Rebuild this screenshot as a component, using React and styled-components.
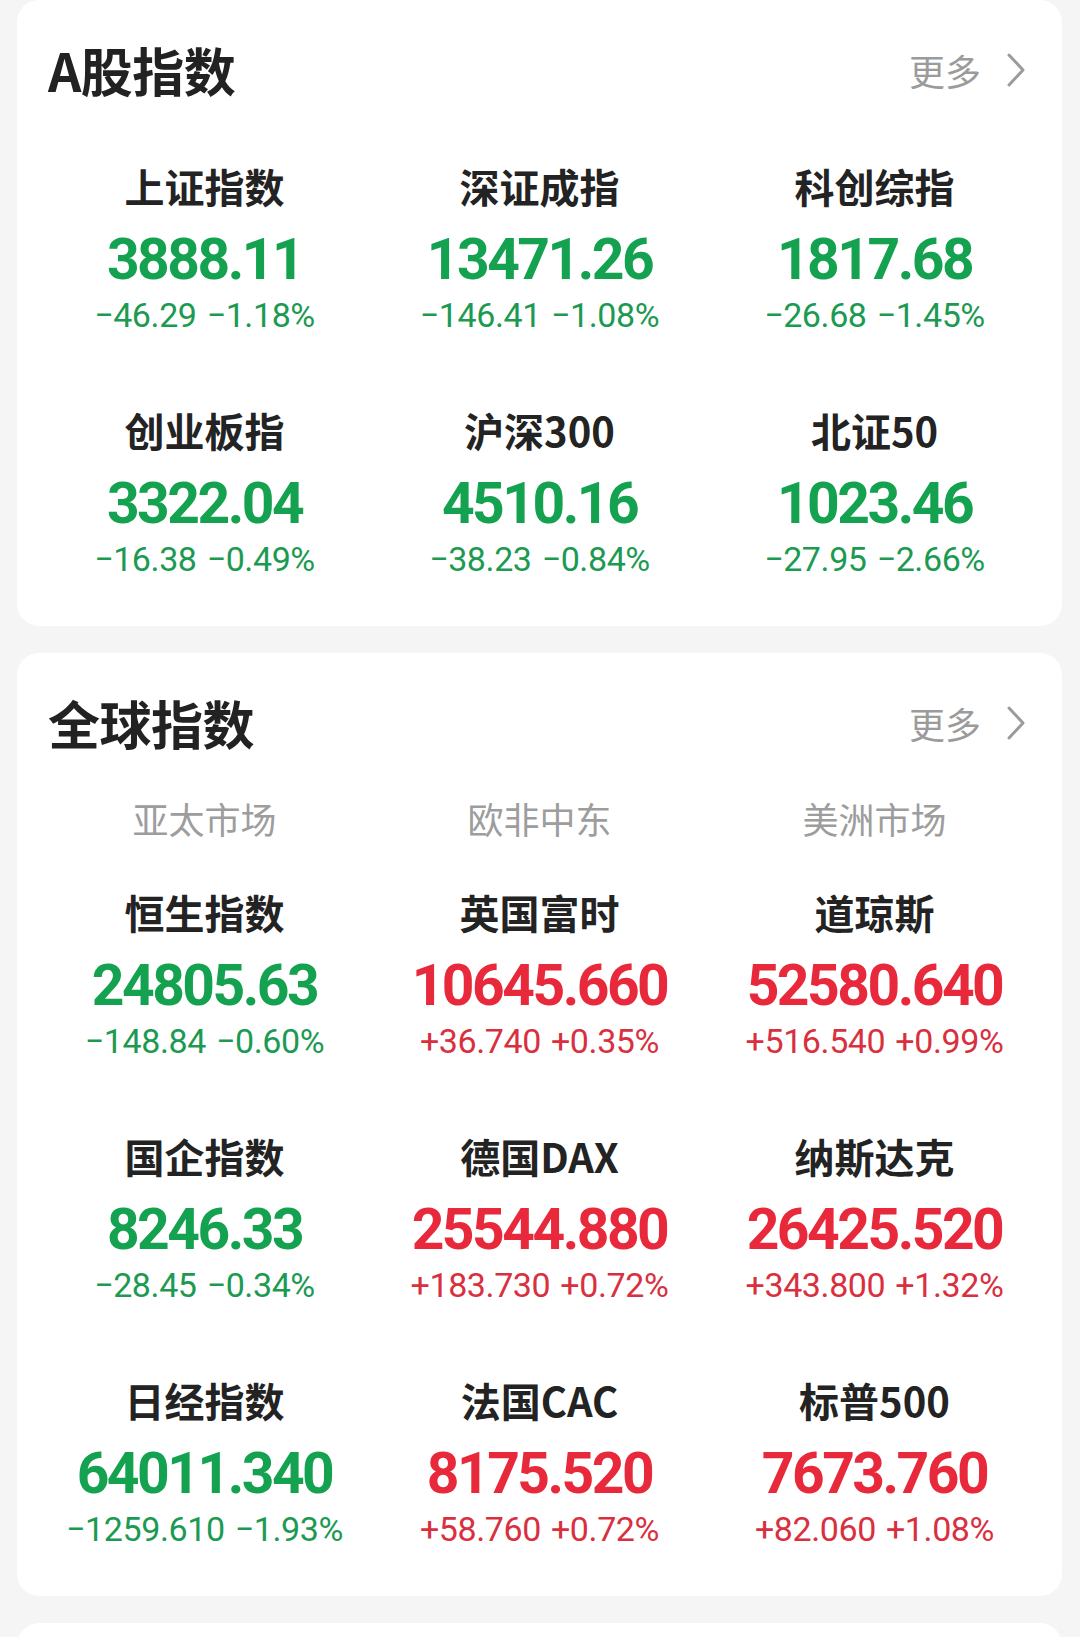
import React from 'react';
import styled, { createGlobalStyle } from 'styled-components';

const GlobalStyle = createGlobalStyle`
  html, body {
    margin: 0;
    padding: 0;
    background: #f5f5f5;
  }
  body {
    font-family: "Noto Sans CJK SC", "Noto Sans", sans-serif;
  }
`;

const Page = styled.div`
  display: flex;
  flex-direction: column;
  gap: 27px;
  padding: 0 18px 0 17px;
  min-height: 1637px;
  box-sizing: border-box;
  overflow: hidden;
`;

const Card = styled.section`
  background: #ffffff;
  border-radius: 22px;
  padding: 40px 20px 47px;
`;

const StubCard = styled.div`
  background: #ffffff;
  border-radius: 22px 22px 0 0;
  height: 60px;
`;

const Header = styled.div`
  display: flex;
  align-items: center;
  justify-content: space-between;
  height: 60px;
  padding: 0 17px 0 11px;
  margin-bottom: ${(p) => p.$gap}px;
`;

const Title = styled.h2`
  margin: 0;
  font-size: 52px;
  font-weight: 700;
  color: #222222;
  line-height: 60px;
  letter-spacing: -0.5px;
`;

const More = styled.a`
  display: flex;
  align-items: center;
  gap: 26px;
  font-size: 36px;
  color: #9b9b9b;
  text-decoration: none;
  line-height: 40px;
`;

const Grid = styled.div`
  display: grid;
  grid-template-columns: repeat(3, 1fr);
  row-gap: 71px;
`;

const Region = styled.div`
  text-align: center;
  font-size: 36px;
  line-height: 40px;
  color: #9d9d9d;
  margin-bottom: 50px;
`;

const Cell = styled.div`
  display: flex;
  flex-direction: column;
  align-items: center;
`;

const Name = styled.div`
  font-size: 40px;
  line-height: 48px;
  font-weight: 700;
  color: #232323;
  white-space: nowrap;
`;

const Value = styled.div`
  margin-top: 18px;
  font-family: Roboto, "Liberation Sans", sans-serif;
  font-size: 57px;
  line-height: 64px;
  font-weight: 700;
  letter-spacing: -2.5px;
  color: ${(p) => (p.$up ? '#e8293b' : '#14a150')};
  white-space: nowrap;
`;

const Change = styled.div`
  margin-top: 3px;
  font-family: Roboto, "Liberation Sans", sans-serif;
  font-size: 34px;
  line-height: 40px;
  font-weight: 400;
  letter-spacing: -0.4px;
  color: ${(p) => (p.$up ? '#d9303f' : '#1c9a52')};
  white-space: nowrap;
  word-spacing: 2px;
`;

const Chevron = () => (
  <svg width="18" height="34" viewBox="0 0 18 34" fill="none">
    <polyline points="2,2 16,17 2,32" stroke="#9b9b9b" strokeWidth="3" strokeLinecap="round" strokeLinejoin="round" />
  </svg>
);

const aShares = [
  { name: '上证指数', value: '3888.11', diff: '−46.29', pct: '−1.18%' },
  { name: '深证成指', value: '13471.26', diff: '−146.41', pct: '−1.08%' },
  { name: '科创综指', value: '1817.68', diff: '−26.68', pct: '−1.45%' },
  { name: '创业板指', value: '3322.04', diff: '−16.38', pct: '−0.49%' },
  { name: '沪深300', value: '4510.16', diff: '−38.23', pct: '−0.84%' },
  { name: '北证50', value: '1023.46', diff: '−27.95', pct: '−2.66%' },
];

const regions = ['亚太市场', '欧非中东', '美洲市场'];

const globalIdx = [
  { name: '恒生指数', value: '24805.63', diff: '−148.84', pct: '−0.60%' },
  { name: '英国富时', value: '10645.660', diff: '+36.740', pct: '+0.35%', up: true },
  { name: '道琼斯', value: '52580.640', diff: '+516.540', pct: '+0.99%', up: true },
  { name: '国企指数', value: '8246.33', diff: '−28.45', pct: '−0.34%' },
  { name: '德国DAX', value: '25544.880', diff: '+183.730', pct: '+0.72%', up: true },
  { name: '纳斯达克', value: '26425.520', diff: '+343.800', pct: '+1.32%', up: true },
  { name: '日经指数', value: '64011.340', diff: '−1259.610', pct: '−1.93%' },
  { name: '法国CAC', value: '8175.520', diff: '+58.760', pct: '+0.72%', up: true },
  { name: '标普500', value: '7673.760', diff: '+82.060', pct: '+1.08%', up: true },
];

const IndexCell = ({ item }) => (
  <Cell>
    <Name>{item.name}</Name>
    <Value $up={item.up}>{item.value}</Value>
    <Change $up={item.up}>
      {item.diff} {item.pct}
    </Change>
  </Cell>
);

const SectionHeader = ({ title, gap }) => (
  <Header $gap={gap}>
    <Title>{title}</Title>
    <More href="#">
      更多
      <Chevron />
    </More>
  </Header>
);

const App = () => (
  <>
    <GlobalStyle />
    <Page>
      <Card>
        <SectionHeader title="A股指数" gap={62} />
        <Grid>
          {aShares.map((it) => (
            <IndexCell key={it.name} item={it} />
          ))}
        </Grid>
      </Card>

      <Card>
        <SectionHeader title="全球指数" gap={45} />
        <Grid>
          {regions.map((r) => (
            <Region key={r}>{r}</Region>
          ))}
        </Grid>
        <Grid>
          {globalIdx.map((it) => (
            <IndexCell key={it.name} item={it} />
          ))}
        </Grid>
      </Card>

      <StubCard />
    </Page>
  </>
);

export default App;
